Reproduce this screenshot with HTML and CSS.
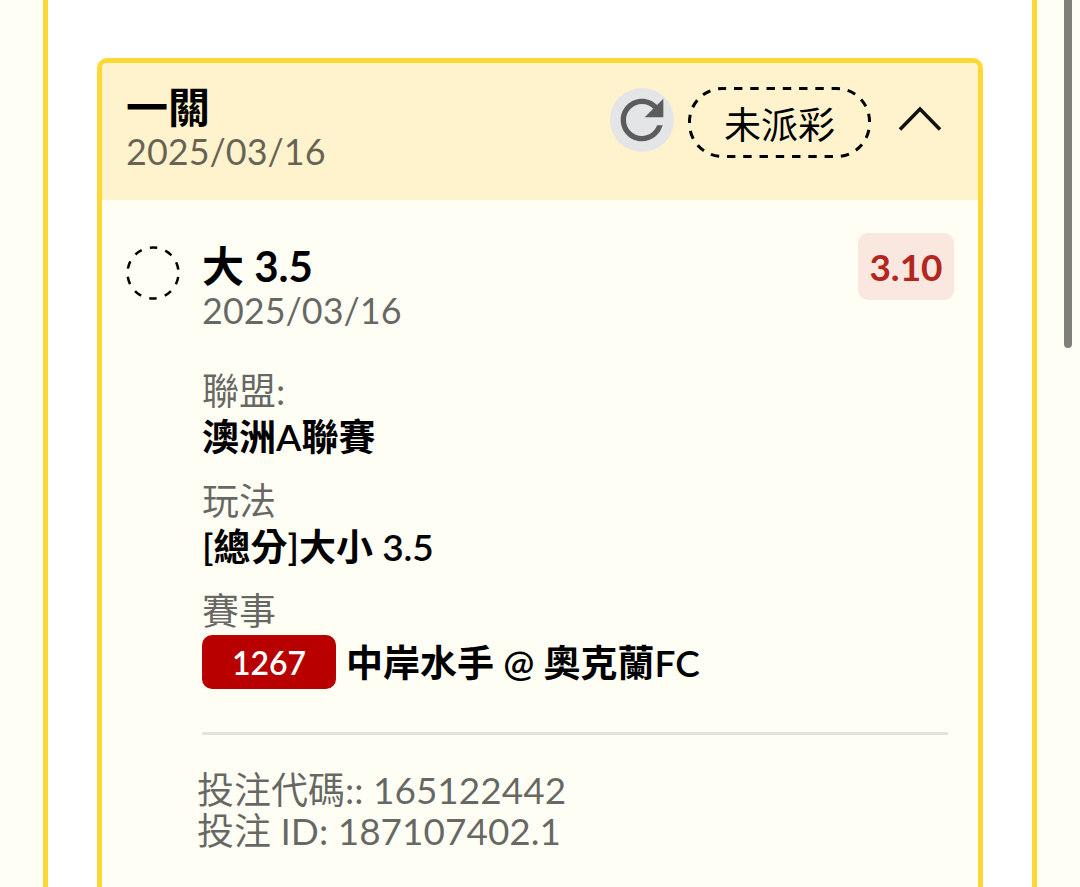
FILE: index.html
```html
<!DOCTYPE html>
<html lang="zh-Hant">

<head>
  <meta charset="utf-8">
  <meta name="viewport" content="width=device-width, initial-scale=1">
  <title>一關</title>
  <link rel="stylesheet" href="styles.css">
</head>

<body>
  <main class="panel">
    <article class="card">
      <header class="card-header">
        <div>
          <h1 class="title">一關</h1>
          <p class="date">2025/03/16</p>
        </div>
        <div class="actions">
          <button class="refresh" type="button" aria-label="重新整理">
            <svg width="64" height="64" viewBox="0 0 24 24">
              <path d="M17.650 6.350C16.200 4.900 14.210 4 12 4c-4.420 0-7.990 3.580-7.990 8s3.570 8 7.990 8c3.730 0 6.840-2.550 7.730-6h-2.080c-.82 2.330-3.040 4-5.650 4-3.310 0-6-2.690-6-6s2.690-6 6-6c1.660 0 3.140.69 4.220 1.780L13 11h7V4l-2.350 2.350z" fill="#5c5c5c" />
            </svg>
          </button>
          <span class="status">
            <svg class="status-line" width="183" height="71" viewBox="0 0 183 71">
              <rect x="1.500" y="1.500" width="180" height="68" rx="33" />
            </svg>
            未派彩
          </span>
          <button class="toggle" type="button" aria-label="收合">
            <svg width="48" height="32" viewBox="0 0 48 32">
              <path d="M4 26.500L24 6L44 26.500" fill="none" stroke="#111" stroke-width="3.500" />
            </svg>
          </button>
        </div>
      </header>

      <section class="bet">
        <svg class="pending" width="54" height="54" viewBox="0 0 54 54">
          <circle cx="27" cy="27" r="25.500" />
        </svg>
        <div class="bet-main">
          <div class="bet-top">
            <div class="bet-name">
              <h2 class="title">大 3.5</h2>
              <p class="date">2025/03/16</p>
            </div>
            <span class="odds">3.10</span>
          </div>
          <dl class="details">
            <div>
              <dt>聯盟:</dt>
              <dd>澳洲A聯賽</dd>
            </div>
            <div>
              <dt>玩法</dt>
              <dd>[總分]大小 3.5</dd>
            </div>
            <div>
              <dt>賽事</dt>
              <dd class="match"><span class="match-no">1267</span>中岸水手 @ 奧克蘭FC</dd>
            </div>
          </dl>
          <hr class="divider">
          <div class="codes">
            <p>投注代碼:: 165122442</p>
            <p>投注 ID: 187107402.1</p>
          </div>
        </div>
      </section>
    </article>
  </main>
  <div class="scroll-thumb"></div>
</body>

</html>
```

FILE: styles.css
```css
* {
  box-sizing: border-box;
}

body {
  margin: 0;
  height: 100vh;
  overflow: hidden;
  background: #fffef5;
  color: #000;
  font-family: Lato, "Noto Sans CJK TC", sans-serif;
  font-size: 37px;
}

h1, h2, p, dl, dd {
  margin: 0;
}

button {
  padding: 0;
  border: none;
  background: none;
  cursor: pointer;
}

svg {
  display: block;
}

.panel {
  display: flex;
  flex-direction: column;
  min-height: 100vh;
  margin: 0 43px;
  padding: 58px 49px 0;
  background: #fff;
  border: solid #fdd835;
  border-width: 0 5px;
}

/* the card runs on past the bottom of the window */
.card {
  flex: 1;
  background: #fffef5;
  border: 5px solid #fdd835;
  border-bottom: none;
  border-radius: 10px 10px 0 0;
}

.card-header {
  display: flex;
  justify-content: space-between;
  padding: 22px 24px 27px;
  background: #fff3cd;
  border-radius: 5px 5px 0 0;
}

.title {
  font-size: 42px;
  font-weight: 700;
  line-height: 44px;
}

.date {
  font-size: 36px;
  line-height: 44px;
  color: rgba(0, 0, 0, 0.6);
}

.actions {
  display: flex;
  align-items: flex-start;
  gap: 14px;
  padding-top: 2px;
}

.refresh {
  width: 64px;
  height: 64px;
  margin-top: 1px;
  background: #e4e5e7;
  border-radius: 50%;
}

.status {
  position: relative;
  width: 183px;
  height: 71px;
  line-height: 75px;
  text-align: center;
}

.status-line {
  position: absolute;
  top: 0;
  left: 0;
  fill: none;
  stroke: #000;
  stroke-width: 3;
  stroke-dasharray: 8.4 7.87;
  stroke-dashoffset: -11.5;
}

.toggle {
  display: flex;
  align-items: center;
  justify-content: center;
  width: 69px;
  height: 64px;
}

.bet {
  display: flex;
  gap: 22px;
  padding: 33px 24px 24px;
}

.pending {
  flex: none;
  margin-top: 13px;
  fill: none;
  stroke: #000;
  stroke-width: 2.5;
  stroke-dasharray: 7.6 8.42;
  stroke-dashoffset: -4;
}

.bet-main {
  flex: 1;
}

.bet-top {
  display: flex;
  justify-content: space-between;
  align-items: flex-start;
}

.bet-name {
  padding-top: 11px;
}

.odds {
  min-width: 96px;
  background: #f9e7e0;
  border-radius: 10px;
  color: #b3261e;
  font-weight: 700;
  line-height: 67px;
  text-align: center;
}

.details {
  display: flex;
  flex-direction: column;
  gap: 18px;
  margin-top: 36px;
  line-height: 46px;
}

.details dt {
  color: rgba(0, 0, 0, 0.6);
}

.details dd {
  font-weight: 600;
}

.details .match {
  display: flex;
  gap: 10px;
  margin-top: 1px;
  line-height: 56px;
}

.match-no {
  width: 134px;
  height: 54px;
  background: #b80000;
  border-radius: 10px;
  color: #fff;
  font-size: 32px;
  text-align: center;
}

.divider {
  height: 3px;
  margin: 41px 6px 0 0;
  border: none;
  background: #e7e3dc;
}

.codes {
  margin: 34px 0 0 -5px;
  color: rgba(0, 0, 0, 0.6);
  line-height: 41px;
}

.scroll-thumb {
  position: absolute;
  top: 0;
  right: 8px;
  width: 8px;
  height: 348px;
  background: #80807b;
  border-radius: 0 0 4px 4px;
}
```
